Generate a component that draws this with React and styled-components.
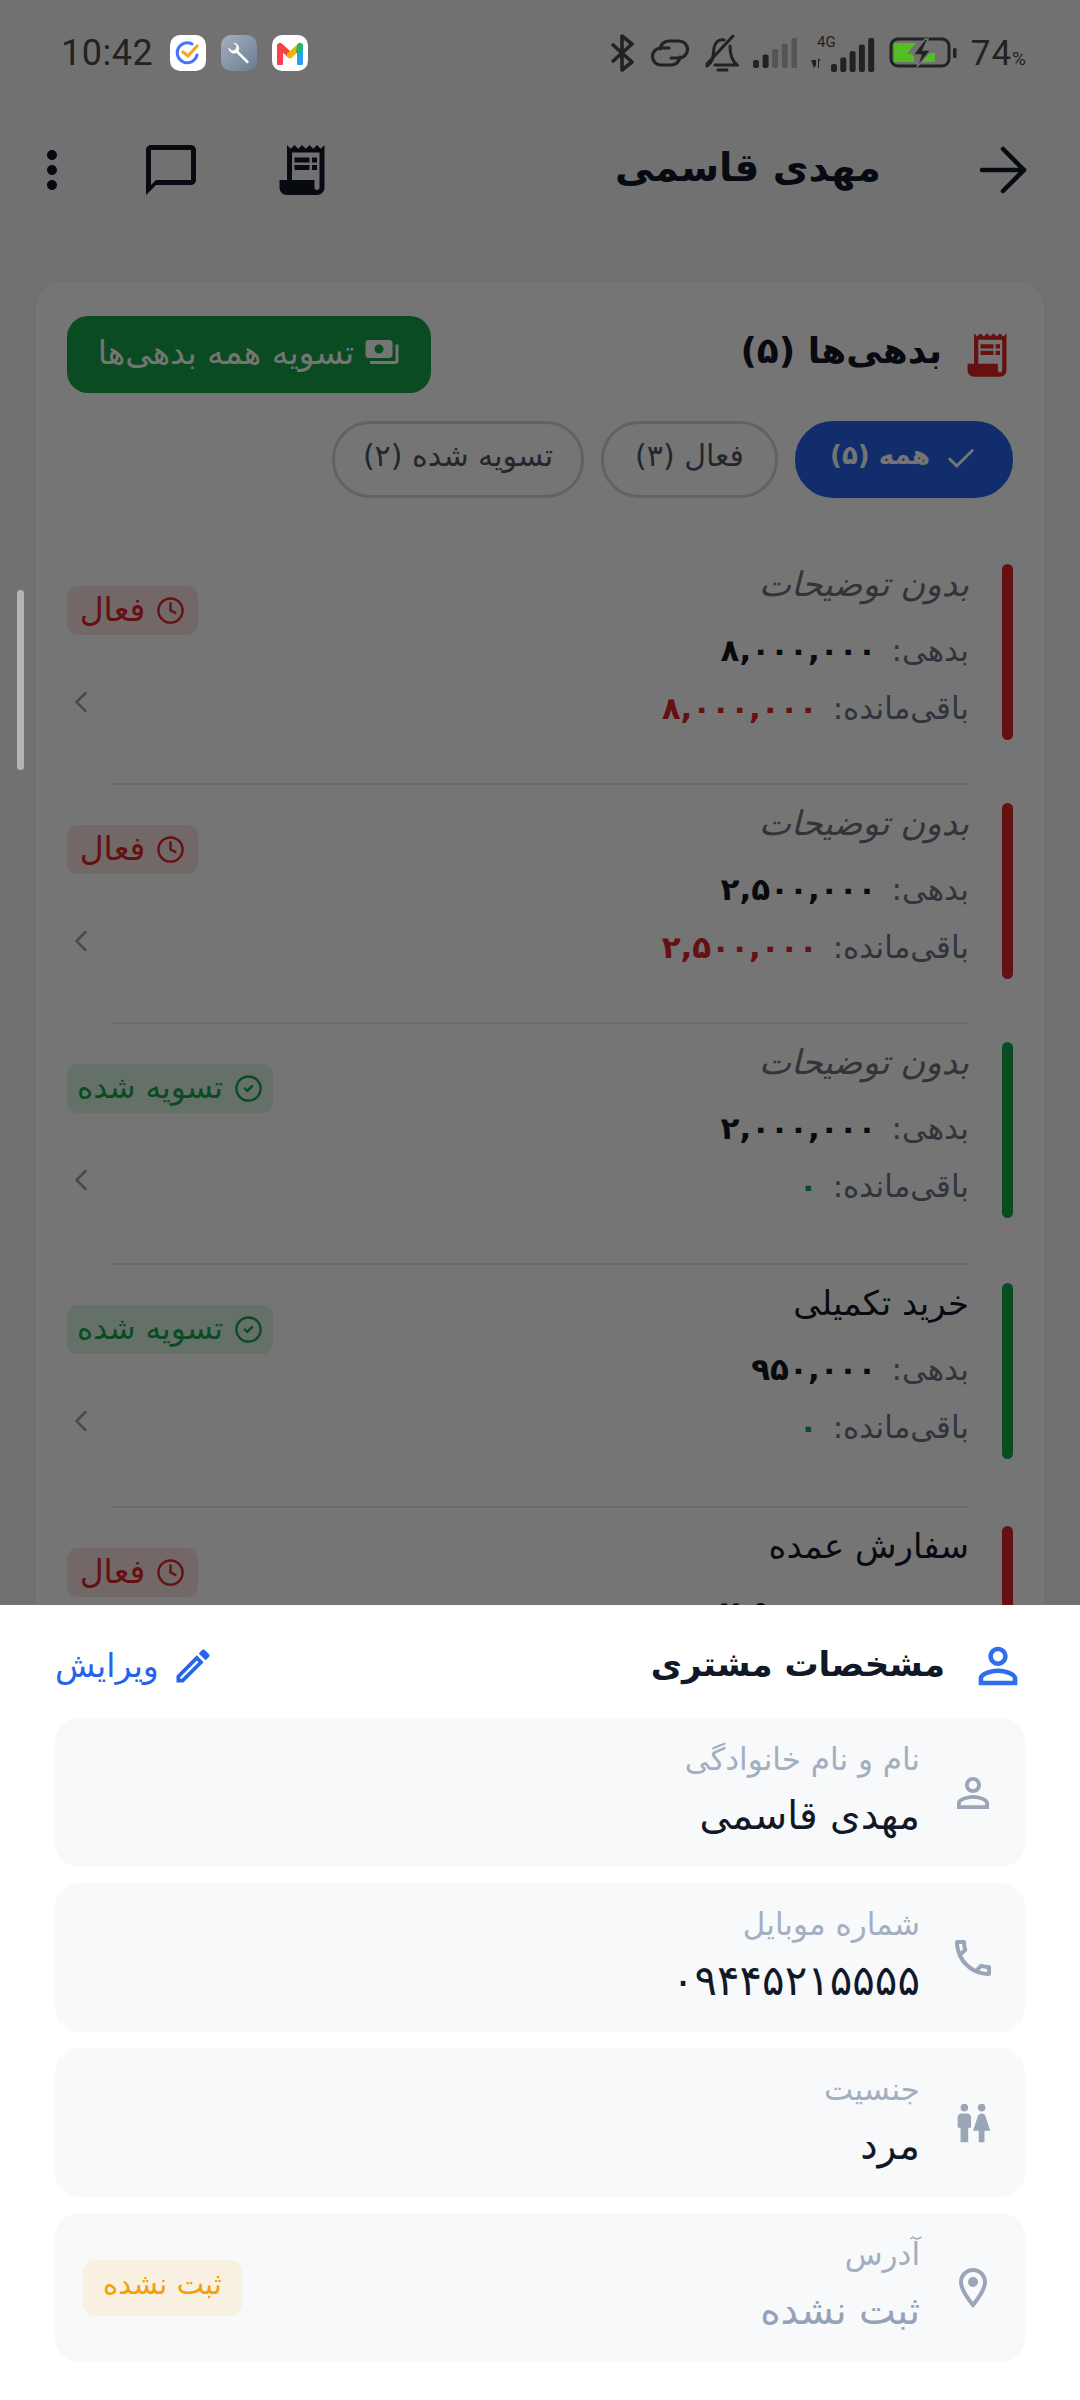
import React from "react";
import styled, { createGlobalStyle } from "styled-components";
import { ArrowRight, Check, ChevronLeft, Clock, CircleCheck } from "lucide-react";

const Global = createGlobalStyle`
  html, body { margin: 0; padding: 0; background: #f6f7f8; }
  * { box-sizing: border-box; }
`;

const Screen = styled.div`
  position: relative;
  width: 1080px;
  height: 2400px;
  overflow: hidden;
  direction: rtl;
  font-family: "DejaVu Sans", sans-serif;
  color: #111827;
  background: #f6f7f8;
`;
const StatusBar = styled.div`
  position: absolute;
  z-index: 3;
  top: 0;
  left: 0;
  right: 0;
  height: 106px;
  direction: ltr;
  display: flex;
  align-items: center;
  justify-content: space-between;
  padding: 0 54px 0 61px;
  color: #222;
`;
const StatusGroup = styled.div`
  display: flex;
  align-items: center;
  gap: ${(p) => p.$gap}px;
`;
const Time = styled.span`
  font-family: Roboto, sans-serif;
  font-size: 36px;
  letter-spacing: 0.5px;
  margin-right: 2px;
  line-height: 1;
`;
const AppIcon = styled.span`
  width: 36px;
  height: 36px;
  border-radius: 10px;
  background: ${(p) => p.$bg || "#fff"};
  display: flex;
  align-items: center;
  justify-content: center;
`;
const Percent = styled.span`
  font-family: Roboto, sans-serif;
  font-size: 35px;
  letter-spacing: 1px;
  line-height: 1;
  small { font-size: 19px; letter-spacing: 0; }
`;
const Page = styled.div`
  background: #f6f7f8;
`;
const Header = styled.header`
  margin-top: 100px;
  height: 140px;
  display: flex;
  align-items: center;
  padding: 0 41px 0 22px;
`;
const Title = styled.h1`
  margin: 0 86px 0 0;
  padding-bottom: 5px;
  font-size: 39px;
  font-weight: 700;
  color: #111827;
`;
const HeaderTools = styled.div`
  margin-right: auto;
  display: flex;
  align-items: center;
  direction: ltr;
  gap: 59px;
  color: #111827;
`;
const ReceiptSlot = styled.span`
  display: flex;
  margin-left: 12px;
`;
const Card = styled.section`
  margin: 41px 34px 0;
  padding: 34px 32px 0;
  background: #fff;
  border: 1px solid #e8eaee;
  border-radius: 26px;
`;
const CardHead = styled.div`
  display: flex;
  align-items: center;
  justify-content: space-between;
`;
const CardTitle = styled.div`
  display: flex;
  align-items: center;
  gap: 19px;
  font-size: 36px;
  font-weight: 700;
  color: #dc2626;
  span { color: #111827; padding-bottom: 8px; }
`;
const SettleButton = styled.button`
  height: 77px;
  width: 364px;
  border: 0;
  border-radius: 21px;
  background: #16a34a;
  color: #fff;
  font: 400 33px "DejaVu Sans", sans-serif;
  display: flex;
  align-items: center;
  justify-content: center;
  gap: 10px;
  padding-bottom: 6px;
`;
const Chips = styled.div`
  display: flex;
  gap: 17px;
  margin-top: 28px;
`;
const Chip = styled.div`
  height: 77px;
  border-radius: 38px;
  width: ${(p) => p.$w}px;
  display: flex;
  align-items: center;
  justify-content: center;
  gap: 14px;
  padding-bottom: 9px;
  font-size: ${(p) => (p.$on ? 26 : 30)}px;
  color: ${(p) => (p.$on ? "#fff" : "#4b5563")};
  background: ${(p) => (p.$on ? "#2563eb" : "#fff")};
  border: 3px solid ${(p) => (p.$on ? "#2563eb" : "#d1d5db")};
  font-weight: ${(p) => (p.$on ? 600 : 400)};
  svg { margin-top: 8px; }
`;
const List = styled.div`
  margin-top: 66px;
`;
const Item = styled.article`
  padding-bottom: ${(p) => p.$tail}px;
  margin-bottom: 18px;
  position: relative;
`;
const ItemBody = styled.div`
  display: flex;
  align-items: stretch;
  height: 176px;
`;
const Accent = styled.div`
  width: 11px;
  border-radius: 6px;
  flex: none;
  background: ${(p) => (p.$paid ? "#16a34a" : "#dc2626")};
`;
const ItemText = styled.div`
  margin-right: 33px;
  flex: 1;
`;
const ItemTitle = styled.div`
  height: 48px;
  line-height: 40px;
  font-size: 34px;
  margin-bottom: 10px;
  color: ${(p) => (p.$muted ? "#6b7280" : "#111827")};
  font-style: ${(p) => (p.$muted ? "italic" : "normal")};
`;
const Amount = styled.div`
  height: 58px;
  line-height: 56px;
  display: flex;
  gap: 15px;
  font-size: 31px;
  color: #6b7280;
`;
const AmountValue = styled.b`
  font-size: 31px;
  font-weight: 700;
  color: ${(p) => p.$c};
`;
const ItemSide = styled.div`
  display: flex;
  flex-direction: column;
  align-items: flex-end;
  justify-content: space-between;
  padding: 22px 0 23px;
  color: #9ca3af;
`;
const Status = styled.div`
  height: 49px;
  width: ${(p) => (p.$paid ? 206 : 131)}px;
  border-radius: 11px;
  display: flex;
  align-items: center;
  justify-content: center;
  gap: 11px;
  padding-bottom: 3px;
  font-size: ${(p) => (p.$paid ? 31 : 33)}px;
  line-height: 1;
  color: ${(p) => (p.$paid ? "#16a34a" : "#dc2626")};
  background: ${(p) => (p.$paid ? "#dcf3e4" : "#fbe3e3")};
  svg { flex: none; margin-top: 3px; }
`;
const ChevronSlot = styled.div`
  margin-left: -4px;
  height: 30px;
  display: flex;
  align-items: center;
`;
const Divider = styled.hr`
  position: absolute;
  bottom: 0;
  left: 44px;
  right: 44px;
  margin: 0;
  border: 0;
  border-top: 2px solid #e5e7eb;
`;
const Scrim = styled.div`
  position: absolute;
  z-index: 1;
  inset: 0;
  background: rgba(0, 0, 0, 0.54);
`;
const ScrollThumb = styled.div`
  position: absolute;
  z-index: 2;
  left: 17px;
  top: 590px;
  width: 7px;
  height: 180px;
  border-radius: 4px;
  background: #b4b4b4;
`;
const Sheet = styled.section`
  position: absolute;
  z-index: 2;
  top: 1605px;
  left: 0;
  right: 0;
  bottom: 0;
  background: #fff;
  padding: 0 55px;
`;
const SheetHead = styled.div`
  height: 113px;
  display: flex;
  align-items: center;
  justify-content: space-between;
  padding-top: 8px;
  margin-right: -2px;
`;
const SheetTitle = styled.div`
  display: flex;
  align-items: center;
  gap: 24px;
  font-size: 34px;
  font-weight: 600;
  color: #2f6fed;
  span { color: #111827; padding-bottom: 4px; }
`;
const EditLink = styled.div`
  display: flex;
  align-items: center;
  gap: 12px;
  font-size: 33px;
  color: #2563eb;
`;
const Fields = styled.div`
  display: flex;
  flex-direction: column;
  gap: 16px;
`;
const Field = styled.div`
  height: 149px;
  border-radius: 24px;
  background: #f8f9fb;
  display: flex;
  align-items: center;
  padding: 0 28px;
`;
const FieldIcon = styled.div`
  width: 48px;
  color: #9aa6b8;
  display: flex;
  justify-content: center;
`;
const FieldText = styled.div`
  margin-right: 29px;
  flex: 1;
`;
const FieldLabel = styled.div`
  height: 44px;
  line-height: 40px;
  margin-bottom: 6px;
  font-size: 31px;
  color: #a3afc0;
`;
const FieldValue = styled.div`
  height: 58px;
  line-height: 54px;
  font-size: ${(p) => (p.$tracked ? 42 : 39)}px;
  letter-spacing: ${(p) => (p.$tracked ? 6 : 0)}px;
  color: ${(p) => (p.$muted ? "#94a3b8" : "#111827")};
`;
const Missing = styled.div`
  height: 56px;
  width: 159px;
  border-radius: 12px;
  background: #f8f1e1;
  color: #f59e0b;
  font-size: 29px;
  padding-bottom: 7px;
  display: flex;
  align-items: center;
  justify-content: center;
`;

const Mi = ({ d, size = 48, children }) => (
  <svg width={size} height={size} viewBox="0 0 24 24" fill="currentColor" aria-hidden="true">
    {d && <path d={d} fillRule="evenodd" />}
    {children}
  </svg>
);
const P = {
  chat: "M20 2H4c-1.1 0-2 .9-2 2v18l4-4h14c1.1 0 2-.9 2-2V4c0-1.1-.9-2-2-2zm0 14H6l-2 2V4h16v12z",
  dots: "M12 8c1.1 0 2-.9 2-2s-.9-2-2-2-2 .9-2 2 .9 2 2 2zm0 2c-1.1 0-2 .9-2 2s.9 2 2 2 2-.9 2-2-.9-2-2-2zm0 6c-1.1 0-2 .9-2 2s.9 2 2 2 2-.9 2-2-.9-2-2-2z",
  receipt: "M19.5 3.5 18 2l-1.5 1.5L15 2l-1.5 1.5L12 2l-1.5 1.5L9 2 7.5 3.5 6 2v14H3v3c0 1.66 1.34 3 3 3h12c1.66 0 3-1.34 3-3V2l-1.5 1.5zM19 19c0 .55-.45 1-1 1s-1-.45-1-1v-3H8V5h11v14zM9 7h6v2H9zM16 7h2v2h-2zM9 10h6v2H9zM16 10h2v2h-2z",
  payments: "M19 14V6c0-1.1-.9-2-2-2H3c-1.1 0-2 .9-2 2v8c0 1.1.9 2 2 2h14c1.1 0 2-.9 2-2zm-9-1c-1.66 0-3-1.34-3-3s1.34-3 3-3 3 1.34 3 3-1.34 3-3 3zm13-6v11c0 1.1-.9 2-2 2H4v-2h17V7h2z",
  person: "M12 5.9c1.16 0 2.1.94 2.1 2.1s-.94 2.1-2.1 2.1S9.9 9.16 9.9 8s.94-2.1 2.1-2.1m0 9c2.97 0 6.1 1.46 6.1 2.1v1.1H5.9V17c0-.64 3.13-2.1 6.1-2.1M12 4C9.79 4 8 5.79 8 8s1.79 4 4 4 4-1.79 4-4-1.79-4-4-4zm0 9c-2.67 0-8 1.34-8 4v3h16v-3c0-2.66-5.33-4-8-4z",
  edit: "M14.06 9.02l.92.92L5.92 19H5v-.92l9.06-9.06M17.66 3c-.25 0-.51.1-.7.29l-1.83 1.83 3.75 3.75 1.83-1.83c.39-.39.39-1.02 0-1.41l-2.34-2.34c-.2-.2-.45-.29-.71-.29zm-3.6 3.19L3 17.25V21h3.75L17.81 9.94l-3.75-3.75z",
  phone: "M6.54 5c.06.89.21 1.76.45 2.59l-1.2 1.2c-.41-1.2-.67-2.47-.76-3.79h1.51m9.86 12.02c.85.24 1.72.39 2.6.45v1.49c-1.32-.09-2.59-.35-3.8-.75l1.2-1.19M7.5 3H4c-.55 0-1 .45-1 1 0 9.39 7.61 17 17 17 .55 0 1-.45 1-1v-3.49c0-.55-.45-1-1-1-1.24 0-2.45-.2-3.57-.57-.1-.04-.21-.05-.31-.05-.26 0-.51.1-.71.29l-2.2 2.2c-2.83-1.45-5.15-3.76-6.59-6.59l2.2-2.2c.28-.28.36-.67.25-1.02C8.7 6.45 8.5 5.25 8.5 4c0-.55-.45-1-1-1z",
  wc: "M5.5 22v-7.5H4V9c0-1.1.9-2 2-2h3c1.1 0 2 .9 2 2v5.5H9.5V22h-4zM18 22v-6h3l-2.54-7.63C18.18 7.55 17.42 7 16.56 7h-.12c-.86 0-1.63.55-1.9 1.37L12 16h3v6h3zM7.5 6c1.11 0 2-.89 2-2s-.89-2-2-2-2 .89-2 2 .89 2 2 2zm9 0c1.11 0 2-.89 2-2s-.89-2-2-2-2 .89-2 2 .89 2 2 2z",
  pin: "M12 2C8.13 2 5 5.13 5 9c0 5.25 7 13 7 13s7-7.75 7-13c0-3.87-3.13-7-7-7zM7 9c0-2.76 2.24-5 5-5s5 2.24 5 5c0 2.88-2.88 7.19-5 9.88C9.92 16.21 7 11.85 7 9z",
};

const Signal = ({ dim }) => (
  <svg width="44" height="30" viewBox="0 0 44 30" aria-hidden="true">
    {[0, 1, 2, 3, 4].map((i) => (
      <rect key={i} x={i * 9.6} y={22 - i * 5.5} width="6" height={8 + i * 5.5} rx="2" fill={dim && i > 1 ? "#555" : "#222"} />
    ))}
  </svg>
);
const Signal4G = () => (
  <svg width="64" height="38" viewBox="0 0 64 38" aria-hidden="true">
    <text x="6" y="13" fontFamily="Roboto, sans-serif" fontSize="15" fill="#222">4G</text>
    <path d="M0 26h5v5l-2 3zM7 24l3 3h-2v7h-1z" fill="#222" />
    {[0, 1, 2, 3, 4].map((i) => (
      <rect key={i} x={20 + i * 9.3} y={30 - i * 6.5} width="6" height={8 + i * 6.5} rx="2" fill="#222" />
    ))}
  </svg>
);

const StatusIcons = () => (
  <StatusGroup $gap={14}>
    <svg width="26" height="38" viewBox="0 0 26 38" fill="none" stroke="#222" strokeWidth="3.6" aria-hidden="true">
      <path d="M3 10l20 18-10 8V2l10 8L3 28" strokeLinejoin="round" />
    </svg>
    <svg width="42" height="30" viewBox="0 0 42 30" fill="none" stroke="#222" strokeWidth="3.2" strokeLinecap="round" aria-hidden="true">
      <path d="M20 10H12a8.5 8.5 0 0 0 0 17h10a9 9 0 0 0 9-8" />
      <path d="M22 20h8a8.5 8.5 0 0 0 0-17H20a9 9 0 0 0-9 8" />
    </svg>
    <svg width="34" height="38" viewBox="0 0 34 38" fill="none" stroke="#222" strokeWidth="3" aria-hidden="true">
      <path d="M2 32C9 28 8 20 9 14 10 8 14 5 19 6M25 12c0 7 1 14 7 19H10M13 36h9" strokeLinecap="round" />
      <path d="M2 30L28 2" strokeLinecap="round" />
    </svg>
    <Signal dim />
    <Signal4G />
    <svg width="68" height="32" viewBox="0 0 68 32" aria-hidden="true">
      <rect x="2" y="2" width="58" height="27" rx="7" fill="none" stroke="#222" strokeWidth="3" />
      <path d="M5 6h22l-9 11h7v8H5zM33 25l6-9h7V25z" fill="#55bd24" />
      <path d="M36 2L24 18h8l-4 12 14-17h-8l5-11z" fill="#222" stroke="#707173" strokeWidth="1.5" />
      <rect x="64" y="11" width="3.5" height="10" rx="1.5" fill="#222" />
    </svg>
    <Percent>74<small>%</small></Percent>
  </StatusGroup>
);

const items = [
  { title: "بدون توضیحات", muted: true, debt: "۸,۰۰۰,۰۰۰", rest: "۸,۰۰۰,۰۰۰", paid: false, tail: 45 },
  { title: "بدون توضیحات", muted: true, debt: "۲,۵۰۰,۰۰۰", rest: "۲,۵۰۰,۰۰۰", paid: false, tail: 45 },
  { title: "بدون توضیحات", muted: true, debt: "۲,۰۰۰,۰۰۰", rest: "۰", paid: true, tail: 47 },
  { title: "خرید تکمیلی", debt: "۹۵۰,۰۰۰", rest: "۰", paid: true, tail: 49 },
  { title: "سفارش عمده", debt: "۷,۵۰۰,۰۰۰", paid: false, tail: 45 },
];

const fields = [
  { label: "نام و نام خانوادگی", value: "مهدی قاسمی", icon: <Mi d={P.person} size={52} /> },
  { label: "شماره موبایل", value: "۰۹۴۴۵۲۱۵۵۵۵", tracked: true, icon: <Mi d={P.phone} size={48} /> },
  { label: "جنسیت", value: "مرد", icon: <Mi d={P.wc} size={46} /> },
  {
    label: "آدرس",
    value: "ثبت نشده",
    muted: true,
    missing: true,
    icon: (
      <Mi d={P.pin} size={50}>
        <circle cx="12" cy="9" r="2.5" />
      </Mi>
    ),
  },
];

export default function App() {
  return (
    <Screen>
      <Global />
      <StatusBar>
        <StatusGroup $gap={15}>
          <Time>10:42</Time>
          <AppIcon>
            <svg width="28" height="28" viewBox="0 0 28 28" fill="none" aria-hidden="true">
              <path d="M23 16a10 10 0 1 1-5-11" stroke="#4772fa" strokeWidth="3" strokeLinecap="round" />
              <path d="M9 13l5 4 9-10" stroke="#f5a623" strokeWidth="3.2" strokeLinecap="round" strokeLinejoin="round" />
            </svg>
          </AppIcon>
          <AppIcon $bg="linear-gradient(135deg,#a4b0c0,#6b7b90)">
            <svg width="28" height="28" viewBox="0 0 24 24" fill="none" aria-hidden="true">
              <path d="M3 7a5 5 0 0 0 7 5l9 9 1.6-1.6-9-9A5 5 0 0 0 7 3.2L10 6 9 9 6 10z" fill="#fff" />
            </svg>
          </AppIcon>
          <AppIcon>
            <svg width="28" height="24" viewBox="0 0 28 24" fill="none" aria-hidden="true">
              <path d="M4 22V6" stroke="#ff3b4e" strokeWidth="6" strokeLinecap="round" />
              <path d="M4 5l10 9" stroke="#ef4444" strokeWidth="6" strokeLinecap="round" />
              <path d="M14 14l10-9" stroke="#f5b400" strokeWidth="6" strokeLinecap="round" />
              <path d="M24 6v16" stroke="#2a9df4" strokeWidth="6" strokeLinecap="round" />
              <path d="M24 5l-1 5" stroke="#22b573" strokeWidth="6" strokeLinecap="round" />
            </svg>
          </AppIcon>
        </StatusGroup>
        <StatusIcons />
      </StatusBar>

      <Page>
        <Header>
          <ArrowRight size={72} strokeWidth={1.5} color="#111827" />
          <Title>مهدی قاسمی</Title>
          <HeaderTools>
            <Mi d={P.dots} size={60} />
            <Mi d={P.chat} size={60} />
            <ReceiptSlot>
              <Mi d={P.receipt} size={60} />
            </ReceiptSlot>
          </HeaderTools>
        </Header>
        <Card>
          <CardHead>
            <CardTitle>
              <Mi d={P.receipt} size={52} />
              <span>بدهی‌ها (۵)</span>
            </CardTitle>
            <SettleButton>
              <Mi d={P.payments} size={36} />
              تسویه همه بدهی‌ها
            </SettleButton>
          </CardHead>
          <Chips>
            <Chip $on $w={218}>
              <Check size={34} strokeWidth={2} />
              همه (۵)
            </Chip>
            <Chip $w={177}>فعال (۳)</Chip>
            <Chip $w={252}>تسویه شده (۲)</Chip>
          </Chips>
          <List>
            {items.map((it, i) => (
              <Item key={i} $tail={it.tail}>
                <ItemBody>
                  <Accent $paid={it.paid} />
                  <ItemText>
                    <ItemTitle $muted={it.muted}>{it.title}</ItemTitle>
                    <Amount>
                      بدهی:
                      <AmountValue $c="#111827">{it.debt}</AmountValue>
                    </Amount>
                    {it.rest && (
                      <Amount>
                        باقی‌مانده:
                        <AmountValue $c={it.paid ? "#16a34a" : "#dc2626"}>{it.rest}</AmountValue>
                      </Amount>
                    )}
                  </ItemText>
                  <ItemSide>
                    <Status $paid={it.paid}>
                      {it.paid ? <CircleCheck size={29} strokeWidth={2} /> : <Clock size={29} strokeWidth={2} />}
                      {it.paid ? "تسویه شده" : "فعال"}
                    </Status>
                    <ChevronSlot>
                      <ChevronLeft size={36} strokeWidth={1.7} />
                    </ChevronSlot>
                  </ItemSide>
                </ItemBody>
                <Divider />
              </Item>
            ))}
          </List>
        </Card>
      </Page>

      <Scrim />
      <ScrollThumb />

      <Sheet>
        <SheetHead>
          <SheetTitle>
            <Mi d={P.person} size={58} />
            <span>مشخصات مشتری</span>
          </SheetTitle>
          <EditLink>
            <Mi d={P.edit} size={44} />
            ویرایش
          </EditLink>
        </SheetHead>
        <Fields>
          {fields.map((f) => (
            <Field key={f.label}>
              <FieldIcon>{f.icon}</FieldIcon>
              <FieldText>
                <FieldLabel>{f.label}</FieldLabel>
                <FieldValue $muted={f.muted} $tracked={f.tracked}>{f.value}</FieldValue>
              </FieldText>
              {f.missing && <Missing>ثبت نشده</Missing>}
            </Field>
          ))}
        </Fields>
      </Sheet>
    </Screen>
  );
}
